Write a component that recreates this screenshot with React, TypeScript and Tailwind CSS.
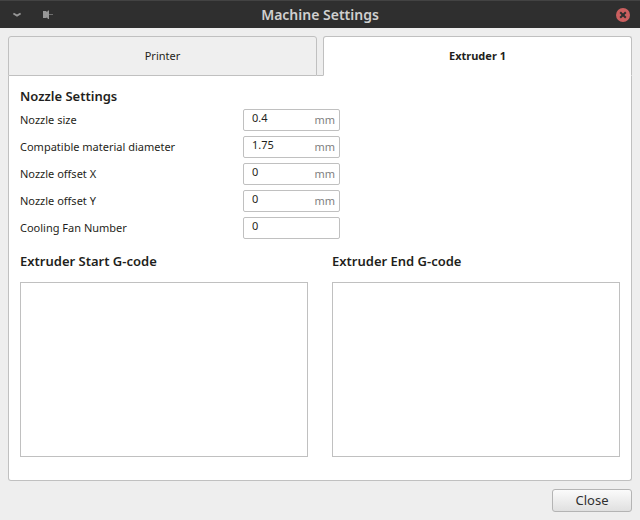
import { useState } from "react";

type Field = { id: string; label: string; value: string; unit?: string };

const fields: Field[] = [
  { id: "nozzle-size", label: "Nozzle size", value: "0.4", unit: "mm" },
  { id: "material-diameter", label: "Compatible material diameter", value: "1.75", unit: "mm" },
  { id: "offset-x", label: "Nozzle offset X", value: "0", unit: "mm" },
  { id: "offset-y", label: "Nozzle offset Y", value: "0", unit: "mm" },
  { id: "fan-number", label: "Cooling Fan Number", value: "0" },
];

function TitleBar() {
  return (
    <header className="grid h-7 grid-cols-[1fr_auto_1fr] items-center border-t border-[#434343] bg-[#2f2f2f] px-2 text-[#979797]">
      <div className="flex items-center gap-3">
        <button type="button" aria-label="Window menu" className="flex size-[18px] items-center justify-center">
          <svg width="8" height="6" viewBox="0 0 8 6" fill="none" stroke="currentColor" strokeWidth="1.8">
            <path d="M0.4 1.4 L4 3.6 L7.6 1.4" />
          </svg>
        </button>
        <button type="button" aria-label="Keep on all desktops" className="flex size-[18px] items-center justify-center">
          <svg width="12" height="10" viewBox="0 0 12 10" fill="currentColor">
            <path d="M2 1 H5 L6 2 L7 0.5 H8 V9 H7 L6 7.5 L5 8 H2 Z" />
            <path d="M8 4 H12 V5 H8 Z" opacity="0.6" />
          </svg>
        </button>
      </div>
      <h1 className="text-sm font-semibold text-[#d0d0d0]">Machine Settings</h1>
      <button type="button" aria-label="Close window" className="flex size-[18px] items-center justify-center justify-self-end">
        <svg width="14" height="14" viewBox="0 0 14 14">
          <circle cx="7" cy="7" r="7" fill="#cb5f5f" />
          <path d="M4.2 4.2 L9.8 9.8 M9.8 4.2 L4.2 9.8" stroke="#2f2f2f" strokeWidth="2" />
        </svg>
      </button>
    </header>
  );
}

function NumberRow({ field }: { field: Field }) {
  return (
    <div className="flex h-[22px] items-center">
      <label htmlFor={field.id} className="w-[223px] text-[11px]">
        {field.label}
      </label>
      <div className="flex h-full w-[97px] items-center rounded-xs border border-[#c0c0c0] bg-white pr-1 pl-2">
        <input
          id={field.id}
          type="text"
          defaultValue={field.value}
          className="h-full min-w-0 flex-1 bg-transparent pb-1.5 text-[11px] outline-none"
        />
        {field.unit && <span className="text-[11px] text-[#808080]">{field.unit}</span>}
      </div>
    </div>
  );
}

function CodeBox({ id, title }: { id: string; title: string }) {
  return (
    <div className="flex flex-1 flex-col">
      <label htmlFor={id} className="text-[13px] leading-5 font-semibold">
        {title}
      </label>
      <textarea id={id} className="mt-[11px] w-full flex-1 resize-none border border-[#c0c0c0] bg-white p-1 font-mono text-[11px] outline-none" />
    </div>
  );
}

export default function App() {
  const [tab, setTab] = useState(1);
  const tabStyle = (index: number) =>
    tab === index ? "border-b-white bg-white font-bold" : "border-b-[#c0c0c0] bg-[#efefef]";
  return (
    <div className="flex min-h-screen flex-col bg-[#eeeeee] font-['Noto_Sans',sans-serif] text-[#1f1f20]">
      <TitleBar />
      <main className="flex flex-1 flex-col p-2">
        <div role="tablist" className="flex h-10 text-[11px]">
          <button
            type="button"
            role="tab"
            aria-selected={tab === 0}
            onClick={() => setTab(0)}
            className={`flex-1 rounded-t-[3px] border border-[#c0c0c0] ${tabStyle(0)}`}
          >
            Printer
          </button>
          <span className="w-1.5 border-b border-[#c0c0c0]" />
          <button
            type="button"
            role="tab"
            aria-selected={tab === 1}
            onClick={() => setTab(1)}
            className={`flex-1 rounded-t-[3px] border border-[#c0c0c0] ${tabStyle(1)}`}
          >
            Extruder 1
          </button>
        </div>
        <section role="tabpanel" className="flex flex-1 flex-col rounded-b-[3px] border border-t-0 border-[#c0c0c0] bg-white px-[11px] pt-[10px] pb-[23px]">
          <h2 className="text-[13px] leading-5 font-semibold">Nozzle Settings</h2>
          <div className="mt-[3px] flex flex-col gap-[5px]">
            {fields.map((field) => (
              <NumberRow key={field.id} field={field} />
            ))}
          </div>
          <div className="mt-3 flex flex-1 gap-6">
            <CodeBox id="start-code" title="Extruder Start G-code" />
            <CodeBox id="end-code" title="Extruder End G-code" />
          </div>
        </section>
        <button
          type="button"
          className="mt-2 h-[23px] w-20 self-end rounded-[3px] border border-[#b4b4b4] bg-linear-to-b from-[#fbfbfb] to-[#e0e0e0] pb-0.5 text-[13px] leading-5 text-[#303030]"
        >
          Close
        </button>
      </main>
    </div>
  );
}
